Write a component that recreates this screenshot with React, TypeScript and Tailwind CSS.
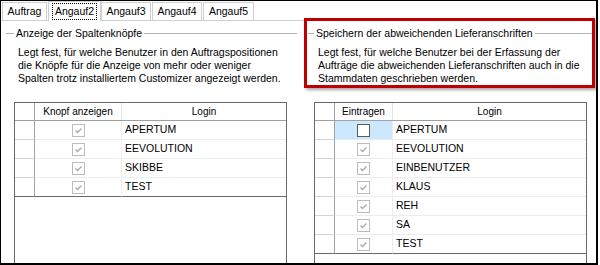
import React from "react";

type Row = { login: string; checked: boolean; selected?: boolean };

const leftRows: Row[] = [
  { login: "APERTUM", checked: true },
  { login: "EEVOLUTION", checked: true },
  { login: "SKIBBE", checked: true },
  { login: "TEST", checked: true },
];

const rightRows: Row[] = [
  { login: "APERTUM", checked: false, selected: true },
  { login: "EEVOLUTION", checked: true },
  { login: "EINBENUTZER", checked: true },
  { login: "KLAUS", checked: true },
  { login: "REH", checked: true },
  { login: "SA", checked: true },
  { login: "TEST", checked: true },
];

const CheckBox: React.FC<{ checked: boolean }> = ({ checked }) => (
  <svg width="13" height="13" viewBox="0 0 13 13">
    <rect
      x="0.5"
      y="0.5"
      width="12"
      height="12"
      fill="#fff"
      stroke={checked ? "#bcbcbc" : "#5c5c5c"}
    />
    {checked && (
      <path d="M3.5 6.5l2 2 4-4" fill="none" stroke="#a8a8a8" strokeWidth="1.3" />
    )}
  </svg>
);

interface GridProps {
  label: string;
  colClass: string;
  rows: Row[];
  className: string;
}

const UserGrid: React.FC<GridProps> = ({ label, colClass, rows, className }) => (
  <div className={`flex flex-1 flex-col border border-b-0 border-[#696969] bg-white ${className}`}>
    {/* Kopfzeile */}
    <div className="flex h-[18px] shrink-0 border-b border-[#a0a0a0] text-[10px] leading-[17px] text-black">
      <div className="w-[20px] shrink-0 border-r border-[#a0a0a0]" />
      <div className={`${colClass} shrink-0 border-r border-[#e5e5e5] text-center`}>{label}</div>
      <div className="flex-1 text-center">Login</div>
    </div>
    {rows.map((r, i) => {
      const last = i === rows.length - 1;
      return (
        <div key={r.login} className="flex h-[19px] shrink-0 text-[10.5px] text-black">
          <div
            className={`w-[20px] shrink-0 border-r border-b border-r-[#a0a0a0] ${
              last ? "border-b-[#696969]" : "border-b-[#d4d4d4]"
            }`}
          />
          <div
            className={`${colClass} flex shrink-0 items-center justify-center border-r border-b border-r-[#ececec] ${
              last ? "border-b-[#696969]" : "border-b-[#ececec]"
            } ${r.selected ? "bg-[#cce8ff]" : ""}`}
          >
            <CheckBox checked={r.checked} />
          </div>
          <div
            className={`flex flex-1 items-center border-b pl-[3px] ${
              last ? "border-b-[#696969]" : "border-b-[#ececec]"
            }`}
          >
            {r.login}
          </div>
        </div>
      );
    })}
  </div>
);

const tabs = [
  { name: "Auftrag", w: "ml-[1px] w-[45px]" },
  { name: "Angauf2", w: "ml-[1px] w-[53px]", active: true },
  { name: "Angauf3", w: "w-[50px]" },
  { name: "Angauf4", w: "ml-[1px] w-[50px]" },
  { name: "Angauf5", w: "ml-[1px] w-[51px]" },
];

export default function App() {
  return (
    <div
      className="flex h-[265px] w-[598px] flex-col overflow-hidden border-t border-l border-r-2 border-b-2 border-black bg-white text-black"
      style={{ fontFamily: '"Liberation Sans", Arial, sans-serif' }}
    >
      {/* Reiter */}
      <div className="flex h-[20px] shrink-0 items-end border-b border-[#d0d0d0] text-[10.5px]">
        {tabs.map((t) =>
          t.active ? (
            <div
              key={t.name}
              className={`${t.w} relative z-10 -mb-px flex h-[20px] items-start justify-center border-x border-t border-[#d0d0d0] bg-white pt-[1px]`}
            >
              <span className="border border-dotted border-black px-[2px] leading-[15px]">{t.name}</span>
            </div>
          ) : (
            <div
              key={t.name}
              className={`${t.w} flex h-[18px] items-start justify-center border-x border-t border-[#d0d0d0] bg-white pt-[1px] leading-[15px]`}
            >
              {t.name}
            </div>
          )
        )}
      </div>

      <div className="flex min-h-0 flex-1">
        {/* Anzeige der Spaltenknöpfe */}
        <div className="flex w-[297px] shrink-0 flex-col pt-[6px] pr-[1px]">
          <div className="flex h-[13px] items-center pl-[5px] text-[10.5px] leading-[13px]">
            <div className="h-px w-[8px] bg-[#b4b4b4]" />
            <span className="ml-[2px]">Anzeige der Spaltenknöpfe</span>
            <div className="ml-[2px] h-px flex-1 bg-[#b4b4b4]" />
          </div>
          <p className="mt-[6px] pl-[17px] text-[10.5px] leading-[13px]">
            Legt fest, für welche Benutzer in den Auftragspositionen
            <br />
            die Knöpfe für die Anzeige von mehr oder weniger
            <br />
            Spalten trotz installiertem Customizer angezeigt werden.
          </p>
          <UserGrid
            label="Knopf anzeigen"
            colClass="w-[87px]"
            rows={leftRows}
            className="mt-[17px] ml-[13px] w-[273px]"
          />
        </div>

        {/* Speichern der abweichenden Lieferanschriften */}
        <div className="ml-[6px] flex w-[291px] shrink-0 flex-col">
          <div className="relative z-20 -mt-[3px] border-[3px] border-[#c00000] pt-[6px] shadow-[2px_2px_3px_rgba(0,0,0,0.35)]">
            <div className="flex h-[13px] items-center pl-[1px] text-[10.5px] leading-[13px]">
              <div className="h-px w-[6px] bg-[#b4b4b4]" />
              <span className="ml-[2px]">Speichern der abweichenden Lieferanschriften</span>
              <div className="ml-[2px] h-px flex-1 bg-[#b4b4b4]" />
            </div>
            <p className="mt-[6px] pl-[11px] text-[10.5px] leading-[13px]">
              Legt fest, für welche Benutzer bei der Erfassung der
              <br />
              Aufträge die abweichenden Lieferanschriften auch in die
              <br />
              Stammdaten geschrieben werden.
            </p>
          </div>
          <UserGrid
            label="Eintragen"
            colClass="w-[58px]"
            rows={rightRows}
            className="mt-[14px] ml-[10px] w-[273px]"
          />
        </div>
      </div>
    </div>
  );
}
